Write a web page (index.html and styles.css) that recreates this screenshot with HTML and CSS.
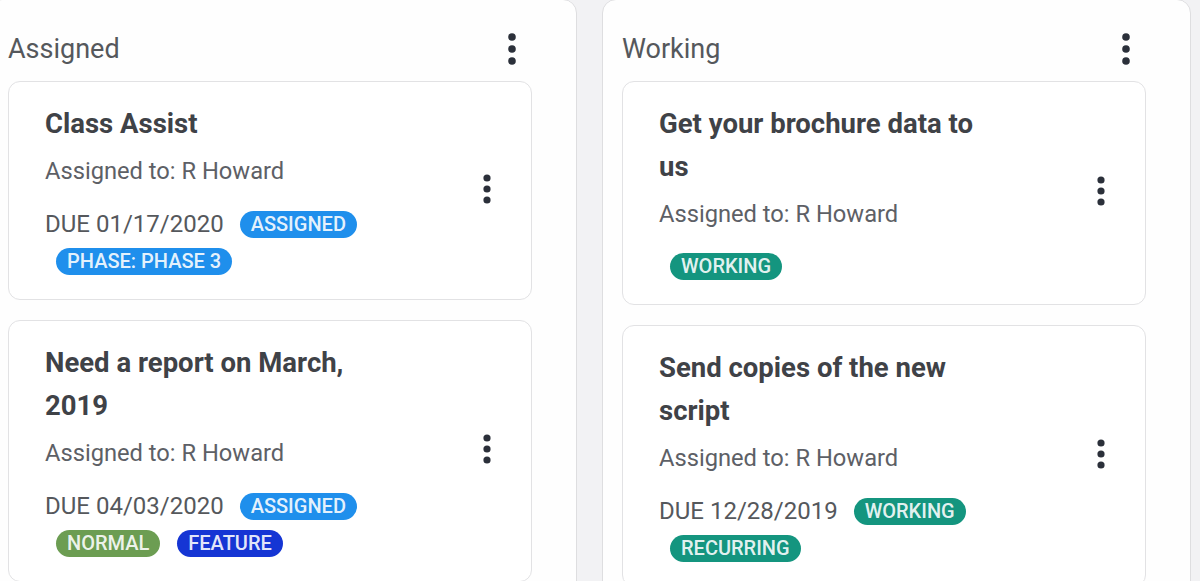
FILE: index.html
```html
<!DOCTYPE html>
<html lang="en">
<head>
<meta charset="utf-8">
<title>Task board</title>
<link rel="stylesheet" href="styles.css">
</head>
<body>
<div class="board">
  <section class="lane">
    <header class="lane-head">
      <h2 class="lane-title">Assigned</h2>
      <button class="kebab kebab-lg" aria-label="Column menu">
        <svg width="10" height="34" viewBox="0 0 10 34"><circle cx="5" cy="5" r="3.8"/><circle cx="5" cy="17" r="3.8"/><circle cx="5" cy="29" r="3.8"/></svg>
      </button>
    </header>
    <div class="lane-cards">
      <article class="card">
        <div class="card-body">
          <h3 class="card-title">Class Assist</h3>
          <div class="card-assignee">Assigned to: R Howard</div>
          <div class="card-meta">
            <span class="due">DUE 01/17/2020</span>
            <span class="chip chip-blue">ASSIGNED</span>
            <span class="chip chip-blue">PHASE: PHASE 3</span>
          </div>
        </div>
        <button class="kebab" aria-label="Card menu">
          <svg width="10" height="32" viewBox="0 0 10 32"><circle cx="5" cy="5" r="3.6"/><circle cx="5" cy="16" r="3.6"/><circle cx="5" cy="27" r="3.6"/></svg>
        </button>
      </article>
      <article class="card">
        <div class="card-body">
          <h3 class="card-title">Need a report on March, 2019</h3>
          <div class="card-assignee">Assigned to: R Howard</div>
          <div class="card-meta">
            <span class="due">DUE 04/03/2020</span>
            <span class="chip chip-blue">ASSIGNED</span>
            <span class="chip chip-green">NORMAL</span>
            <span class="chip chip-navy">FEATURE</span>
          </div>
        </div>
        <button class="kebab" aria-label="Card menu">
          <svg width="10" height="32" viewBox="0 0 10 32"><circle cx="5" cy="5" r="3.6"/><circle cx="5" cy="16" r="3.6"/><circle cx="5" cy="27" r="3.6"/></svg>
        </button>
      </article>
    </div>
  </section>

  <section class="lane">
    <header class="lane-head">
      <h2 class="lane-title">Working</h2>
      <button class="kebab kebab-lg" aria-label="Column menu">
        <svg width="10" height="34" viewBox="0 0 10 34"><circle cx="5" cy="5" r="3.8"/><circle cx="5" cy="17" r="3.8"/><circle cx="5" cy="29" r="3.8"/></svg>
      </button>
    </header>
    <div class="lane-cards">
      <article class="card">
        <div class="card-body">
          <h3 class="card-title">Get your brochure data to us</h3>
          <div class="card-assignee">Assigned to: R Howard</div>
          <div class="card-meta">
            <span class="chip chip-teal">WORKING</span>
          </div>
        </div>
        <button class="kebab" aria-label="Card menu">
          <svg width="10" height="32" viewBox="0 0 10 32"><circle cx="5" cy="5" r="3.6"/><circle cx="5" cy="16" r="3.6"/><circle cx="5" cy="27" r="3.6"/></svg>
        </button>
      </article>
      <article class="card">
        <div class="card-body">
          <h3 class="card-title">Send copies of the new script</h3>
          <div class="card-assignee">Assigned to: R Howard</div>
          <div class="card-meta">
            <span class="due">DUE 12/28/2019</span>
            <span class="chip chip-teal">WORKING</span>
            <span class="chip chip-teal">RECURRING</span>
          </div>
        </div>
        <button class="kebab" aria-label="Card menu">
          <svg width="10" height="32" viewBox="0 0 10 32"><circle cx="5" cy="5" r="3.6"/><circle cx="5" cy="16" r="3.6"/><circle cx="5" cy="27" r="3.6"/></svg>
        </button>
      </article>
    </div>
  </section>
</div>
</body>
</html>
```

FILE: styles.css
```css
* { box-sizing: border-box; }

html, body {
  margin: 0;
  padding: 0;
  height: 100%;
  overflow: hidden;
}

body {
  background: #f2f2f4;
  font-family: Roboto, "Liberation Sans", Arial, sans-serif;
  color: #4a4d52;
}

.board {
  display: flex;
  gap: 25px;
  margin-left: -12px;
  margin-top: -1px;
}

.lane {
  flex: 0 0 589px;
  background: #fefefe;
  border: 1px solid #dedee0;
  border-radius: 14px;
  padding: 22px 44px 0 19px;
  height: 620px;
}

.lane-head {
  display: flex;
  align-items: center;
  justify-content: space-between;
  height: 54px;
  padding-right: 15px;
  margin-bottom: 5px;
}

.lane-title {
  margin: 0;
  font-size: 27px;
  font-weight: 400;
  color: #55585c;
  line-height: 1;
}

.kebab {
  border: 0;
  background: none;
  padding: 0;
  display: flex;
  align-items: center;
  justify-content: center;
}

.kebab svg { fill: #2b303a; display: block; }

.lane-cards {
  display: flex;
  flex-direction: column;
  gap: 20px;
}

.card {
  display: flex;
  align-items: center;
  background: #fff;
  border: 1px solid #e2e2e4;
  border-radius: 12px;
  padding: 20px 39px 24px 36px;
}

.card-body {
  width: 330px;
}

.card .kebab {
  margin-left: auto;
}

.card-title {
  margin: 0;
  font-size: 27.5px;
  font-weight: 700;
  line-height: 43px;
  color: #3f4247;
}

.card-assignee {
  margin-top: 11px;
  font-size: 23.7px;
  line-height: 30px;
  color: #5d6066;
}

.card-meta {
  display: flex;
  flex-wrap: wrap;
  align-items: center;
  row-gap: 10px;
  margin-top: 24px;
}

.due {
  font-size: 24px;
  line-height: 28px;
  color: #55585c;
  margin-right: 5px;
}

.chip {
  display: inline-block;
  height: 27px;
  line-height: 27px;
  padding: 0 11px;
  border-radius: 14px;
  font-size: 20px;
  font-weight: 500;
  color: rgba(255, 255, 255, 0.9);
  margin-left: 11px;
  margin-right: 6px;
  white-space: nowrap;
}

.chip-blue { background: #1f8fec; }
.chip-green { background: #6c9d52; }
.chip-navy { background: #1535d4; }
.chip-teal { background: #14957f; }
```
